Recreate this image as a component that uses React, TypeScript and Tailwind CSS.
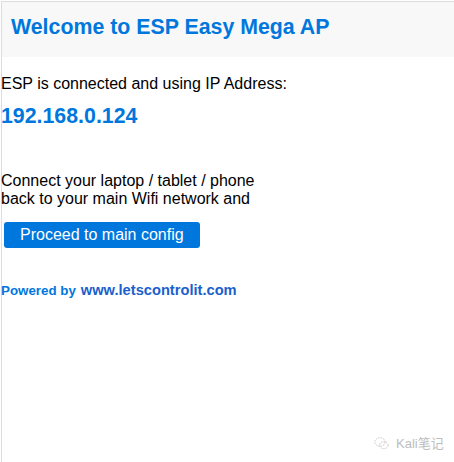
import React from 'react';

const WeChatMark: React.FC = () => (
  <svg width="15" height="13" viewBox="0 0 15 13" fill="none" stroke="#c8c8c8" strokeWidth="1" strokeDasharray="1.5 1">
    <ellipse cx="6" cy="5" rx="5.2" ry="4.2" />
    <ellipse cx="9.8" cy="8.2" rx="4.3" ry="3.5" />
  </svg>
);

export default function App() {
  return (
    <div className="relative min-h-[462px] w-[454px] bg-white pt-px pl-px font-['Liberation_Sans',Arial,sans-serif]">
      <div className="min-h-[461px] border-t border-l border-[#dddddd]">
        <header className="h-[55px] bg-[#f8f8f8] pl-[9px] pt-[13px]">
          <h1 className="text-[21.33px] font-bold leading-[25px] text-[#0077dd]">Welcome to ESP Easy Mega AP</h1>
        </header>

        <main className="-ml-px pt-[18px]">
          <p className="text-[16px] leading-[18px] text-black">ESP is connected and using IP Address:</p>
          <h2 className="mt-[11px] text-[21.33px] font-bold leading-[25px] text-[#0077dd]">192.168.0.124</h2>

          <p className="mt-[43px] text-[16px] leading-[18px] text-black">
            Connect your laptop / tablet / phone
            <br />
            back to your main Wifi network and
          </p>

          <button className="mt-[14px] ml-[3px] flex h-[26px] items-center rounded-[3px] bg-[#0077dd] px-4 text-[16px] leading-[18px] text-white">
            Proceed to main config
          </button>

          <footer className="mt-[31px] flex items-baseline gap-[5px] font-bold">
            <span className="text-[13.33px] text-[#0077dd]">Powered by</span>
            <a className="text-[14.67px] text-[#1b5fcc]">www.letscontrolit.com</a>
          </footer>
        </main>
      </div>

      <div className="absolute left-[374px] top-[434px] flex items-center gap-[7px] text-[13px] text-[#bdbdbd] font-['Liberation_Sans','Noto_Sans_CJK_SC',sans-serif]">
        <WeChatMark />
        <span>Kali笔记</span>
      </div>
    </div>
  );
}
